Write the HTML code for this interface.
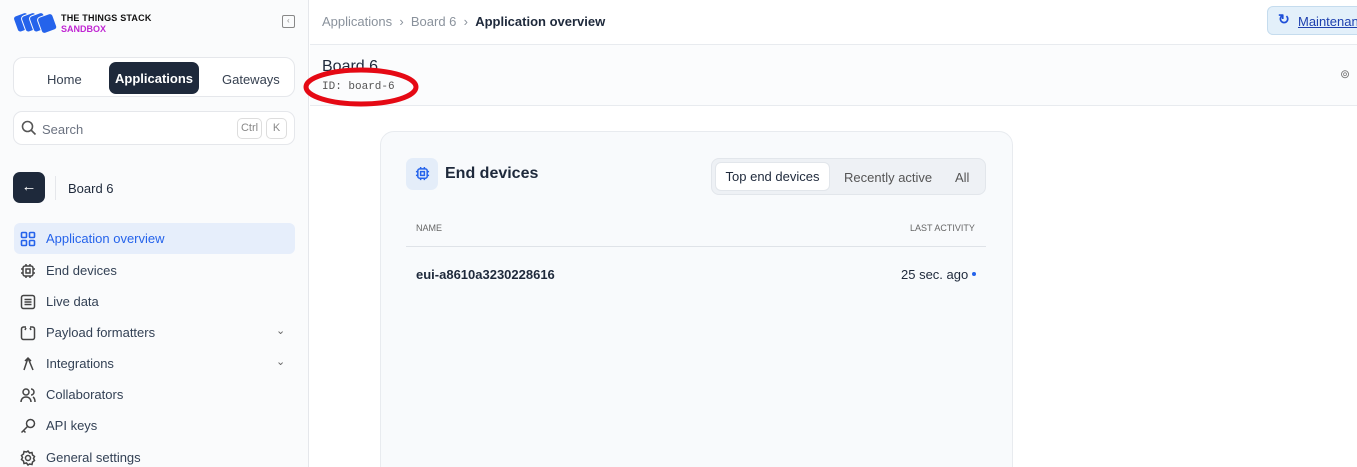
<!DOCTYPE html>
<html style="overflow:hidden;width:1357px;height:467px"><head><meta charset="utf-8"><style>
*{box-sizing:border-box;margin:0;padding:0}
body{width:1357px;height:467px;overflow:hidden;font-family:"Liberation Sans",sans-serif;background:#fff;position:relative;color:#1e293b}
.a{position:absolute}
.side{left:0;top:0;width:309px;height:467px;background:#fafbfc;border-right:1px solid #e5e7eb}
.nav{font-size:13px;color:#374151}
.item{position:absolute;left:14px;width:281px;height:31px;display:flex;align-items:center;padding-left:6px;font-size:13px;color:#334155}
.item svg{width:16px;height:16px;margin-right:10px}
</style></head><body>
<div class="a side">
  <svg class="a" style="left:12px;top:10px" width="46" height="26" viewBox="0 0 46 26">
    <g fill="#2563eb" stroke="#fafbfc" stroke-width="1"><rect x="3" y="4" width="15" height="17" rx="3" transform="rotate(-20 10 12)"/><rect x="11" y="4" width="15" height="17" rx="3" transform="rotate(-20 18 12)"/><rect x="19" y="4" width="15" height="17" rx="3" transform="rotate(-20 26 12)"/><rect x="27" y="5" width="16" height="17" rx="3" transform="rotate(-20 35 13)"/></g>
  </svg>
  <div class="a" style="left:61px;top:13px;font-size:9px;font-weight:bold;color:#111;letter-spacing:.2px">THE THINGS STACK</div>
  <div class="a" style="left:61px;top:24px;font-size:9px;font-weight:bold;color:#c026d3">SANDBOX</div>
  <div class="a" style="left:282px;top:15px;width:13px;height:13px;border:1.5px solid #888;border-radius:2px"></div>
  <div class="a" style="left:287px;top:16px;font-size:8px;color:#888">‹</div>
  <div class="a" style="left:13px;top:57px;width:282px;height:40px;border:1px solid #e5e7eb;border-radius:10px;background:#fff"></div>
  <div class="a nav" style="left:47px;top:72px">Home</div>
  <div class="a" style="left:109px;top:62px;width:90px;height:32px;background:#1e293b;border-radius:7px;color:#fff;font-size:13px;font-weight:bold;display:flex;align-items:center;justify-content:center">Applications</div>
  <div class="a nav" style="left:222px;top:72px">Gateways</div>
  <div class="a" style="left:13px;top:111px;width:282px;height:34px;border:1px solid #e5e7eb;border-radius:9px;background:#fff"></div>
  <svg class="a" style="left:21px;top:120px" width="16" height="16" viewBox="0 0 16 16" fill="none" stroke="#555" stroke-width="1.6"><circle cx="6.5" cy="6.5" r="5"/><path d="M10 10l4.5 4.5"/></svg>
  <div class="a" style="left:42px;top:122px;font-size:13px;color:#6b7280">Search</div>
  <div class="a" style="left:237px;top:118px;width:25px;height:21px;border:1px solid #ddd;border-radius:5px;font-size:11px;color:#888;text-align:center;line-height:19px">Ctrl</div>
  <div class="a" style="left:266px;top:118px;width:21px;height:21px;border:1px solid #ddd;border-radius:5px;font-size:11px;color:#888;text-align:center;line-height:19px">K</div>
  <div class="a" style="left:13px;top:172px;width:32px;height:31px;background:#1e293b;border-radius:7px;color:#fff;text-align:center;line-height:30px;font-size:15px">←</div>
  <div class="a" style="left:55px;top:176px;width:1px;height:24px;background:#e5e7eb"></div>
  <div class="a" style="left:68px;top:181px;font-size:13px;color:#1e293b">Board 6</div>
  <div class="item" style="top:223px;background:#e6eefb;border-radius:6px;color:#2563eb"><svg viewBox="0 0 16 16" fill="none" stroke="#2563eb" stroke-width="1.6"><rect x="1.5" y="1.5" width="5" height="5" rx="1"/><rect x="9.5" y="1.5" width="5" height="5" rx="1"/><rect x="1.5" y="9.5" width="5" height="5" rx="1"/><rect x="9.5" y="9.5" width="5" height="5" rx="1"/></svg>Application overview</div>
  <div class="item" style="top:255px"><svg viewBox="0 0 16 16" fill="none" stroke="#444" stroke-width="1.5"><rect x="3" y="3" width="10" height="10" rx="2"/><rect x="6" y="6" width="4" height="4"/><path d="M6 1v2M10 1v2M6 13v2M10 13v2M1 6h2M1 10h2M13 6h2M13 10h2"/></svg>End devices</div>
  <div class="item" style="top:286px"><svg viewBox="0 0 16 16" fill="none" stroke="#444" stroke-width="1.5"><rect x="1.5" y="1.5" width="13" height="13" rx="2"/><path d="M4.5 5.5h7M4.5 8h7M4.5 10.5h7"/></svg>Live data</div>
  <div class="item" style="top:317px"><svg viewBox="0 0 16 16" fill="none" stroke="#444" stroke-width="1.5"><path d="M6 2H3.5a2 2 0 0 0-2 2v8.5a2 2 0 0 0 2 2h9a2 2 0 0 0 2-2V4a2 2 0 0 0-2-2H10M5 5l1-2M10 3l1 2"/></svg>Payload formatters</div>
  <div class="item" style="top:348px"><svg viewBox="0 0 16 16" fill="none" stroke="#444" stroke-width="1.5"><path d="M8 2L4 14M8 2l5 12M5 5l3-3 3 3"/></svg>Integrations</div>
  <div class="item" style="top:379px"><svg viewBox="0 0 16 16" fill="none" stroke="#444" stroke-width="1.5"><circle cx="6" cy="5" r="3"/><path d="M1 15c0-3 2-5 5-5s5 2 5 5M11 2a3 3 0 0 1 0 6M13 10c1.5 1 2 3 2 5"/></svg>Collaborators</div>
  <div class="item" style="top:410px"><svg viewBox="0 0 16 16" fill="none" stroke="#444" stroke-width="1.5"><circle cx="10.5" cy="5.5" r="4"/><path d="M7.5 8.5L1.5 14.5M3.5 12.5l2 2"/></svg>API keys</div>
  <div class="item" style="top:442px"><svg viewBox="0 0 16 16" fill="none" stroke="#444" stroke-width="1.5"><circle cx="8" cy="8" r="2.5"/><path d="M8 1l1.5 2 2.5-.5.5 2.5 2 1.5-1 2 1 2-2 1.5-.5 2.5-2.5-.5L8 15l-1.5-2-2.5.5-.5-2.5-2-1.5 1-2-1-2 2-1.5.5-2.5 2.5.5z"/></svg>General settings</div>
  <div class="a" style="left:276px;top:324px;font-size:11px;color:#666">⌄</div>
  <div class="a" style="left:276px;top:355px;font-size:11px;color:#666">⌄</div>
</div>
<div class="a" style="left:310px;top:44px;width:1047px;height:1px;background:#e8ebef"></div>
<div class="a" style="left:310px;top:45px;width:1047px;height:60px;background:#fbfcfd"></div>
<div class="a" style="left:310px;top:105px;width:1047px;height:1px;background:#e8ebef"></div>
<div class="a" style="left:322px;top:14px;font-size:13px;color:#8a929c">Applications &nbsp;›&nbsp; Board 6 &nbsp;›&nbsp; <b style="color:#1e293b">Application overview</b></div>
<div class="a" style="left:1267px;top:6px;width:100px;height:29px;background:#e3f0fa;border:1px solid #c5dcee;border-radius:6px"></div>
<div class="a" style="left:1278px;top:11px;font-size:14px;color:#1d4ed8;font-weight:bold">↻</div>
<div class="a" style="left:1298px;top:14px;font-size:13px;color:#1e40af;text-decoration:underline">Maintenance</div>
<div class="a" style="left:1340px;top:67px;font-size:12px;color:#777">⊚</div>
<div class="a" style="left:322px;top:58px;font-size:16px;color:#1e293b">Board 6</div>
<div class="a" style="left:322px;top:81px;font-size:11px;font-family:'Liberation Mono',monospace;color:#555">ID: board-6</div>
<svg class="a" style="left:300px;top:64px" width="125" height="46"><ellipse cx="61" cy="23" rx="55" ry="17" fill="none" stroke="#e50914" stroke-width="5"/></svg>
<div class="a" style="left:380px;top:131px;width:633px;height:350px;background:#f8fafc;border:1px solid #e8ebef;border-radius:14px"></div>
<div class="a" style="left:406px;top:158px;width:32px;height:32px;background:#e4edf9;border-radius:7px"></div>
<svg class="a" style="left:415px;top:166px" width="15" height="15" viewBox="0 0 16 16" fill="none" stroke="#2563eb" stroke-width="1.6"><rect x="3" y="3" width="10" height="10" rx="2"/><rect x="6" y="6" width="4" height="4"/><path d="M6 1v2M10 1v2M6 13v2M10 13v2M1 6h2M1 10h2M13 6h2M13 10h2"/></svg>
<div class="a" style="left:445px;top:165px;font-size:16px;font-weight:bold;color:#1e293b">End devices</div>
<div class="a" style="left:711px;top:158px;width:275px;height:37px;background:#eef1f5;border:1px solid #e2e6eb;border-radius:8px"></div>
<div class="a" style="left:715px;top:162px;width:115px;height:29px;background:#fff;border:1px solid #e2e6eb;border-radius:6px;font-size:13px;color:#1e293b;text-align:center;line-height:28px">Top end devices</div>
<div class="a" style="left:844px;top:170px;font-size:13px;color:#555">Recently active</div>
<div class="a" style="left:955px;top:170px;font-size:13px;color:#555">All</div>
<div class="a" style="left:416px;top:223px;font-size:9px;color:#666">NAME</div>
<div class="a" style="left:910px;top:223px;font-size:9px;color:#666">LAST ACTIVITY</div>
<div class="a" style="left:406px;top:246px;width:580px;height:1px;background:#dfe3e8"></div>
<div class="a" style="left:416px;top:267px;font-size:13px;font-weight:bold;color:#1e293b">eui-a8610a3230228616</div>
<div class="a" style="left:901px;top:267px;font-size:13px;color:#1e293b">25 sec. ago</div>
<div class="a" style="left:972px;top:272px;width:4px;height:4px;border-radius:50%;background:#2563eb"></div>
</body></html>
